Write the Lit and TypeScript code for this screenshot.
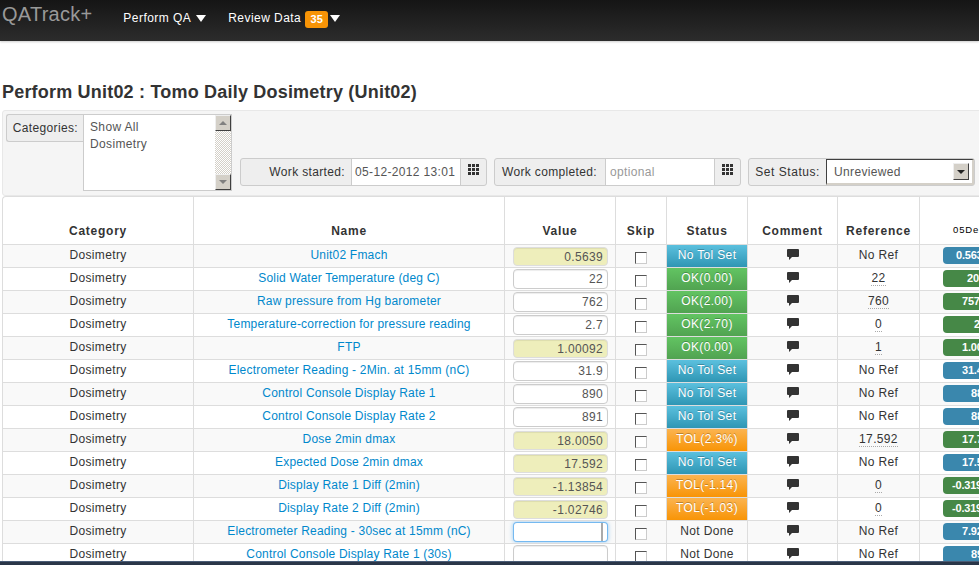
import { LitElement, css, html, svg } from 'lit';
import { customElement } from 'lit/decorators.js';

type Row = {
  name: string;
  value: string;
  calc?: boolean;
  status: string;
  kind: 'info' | 'ok' | 'tol' | 'none';
  ref: string;
  last: string;
  lastKind: 'info' | 'ok';
  lastPad: number;
  focus?: boolean;
};

const ROWS: Row[] = [
  { name: 'Unit02 Fmach', value: '0.5639', calc: true, status: 'No Tol Set', kind: 'info', ref: 'No Ref', last: '0.5639', lastKind: 'info', lastPad: 13 },
  { name: 'Solid Water Temperature (deg C)', value: '22', status: 'OK(0.00)', kind: 'ok', ref: '22', last: '20', lastKind: 'ok', lastPad: 24 },
  { name: 'Raw pressure from Hg barometer', value: '762', status: 'OK(2.00)', kind: 'ok', ref: '760', last: '757', lastKind: 'ok', lastPad: 19 },
  { name: 'Temperature-correction for pressure reading', value: '2.7', status: 'OK(2.70)', kind: 'ok', ref: '0', last: '2', lastKind: 'ok', lastPad: 31 },
  { name: 'FTP', value: '1.00092', calc: true, status: 'OK(0.00)', kind: 'ok', ref: '1', last: '1.00', lastKind: 'ok', lastPad: 19 },
  { name: 'Electrometer Reading - 2Min. at 15mm (nC)', value: '31.9', status: 'No Tol Set', kind: 'info', ref: 'No Ref', last: '31.4', lastKind: 'info', lastPad: 19 },
  { name: 'Control Console Display Rate 1', value: '890', status: 'No Tol Set', kind: 'info', ref: 'No Ref', last: '88', lastKind: 'info', lastPad: 28 },
  { name: 'Control Console Display Rate 2', value: '891', status: 'No Tol Set', kind: 'info', ref: 'No Ref', last: '88', lastKind: 'info', lastPad: 28 },
  { name: 'Dose 2min dmax', value: '18.0050', calc: true, status: 'TOL(2.3%)', kind: 'tol', ref: '17.592', last: '17.7', lastKind: 'ok', lastPad: 19 },
  { name: 'Expected Dose 2min dmax', value: '17.592', calc: true, status: 'No Tol Set', kind: 'info', ref: 'No Ref', last: '17.5', lastKind: 'info', lastPad: 19 },
  { name: 'Display Rate 1 Diff (2min)', value: '-1.13854', calc: true, status: 'TOL(-1.14)', kind: 'tol', ref: '0', last: '-0.319', lastKind: 'ok', lastPad: 9 },
  { name: 'Display Rate 2 Diff (2min)', value: '-1.02746', calc: true, status: 'TOL(-1.03)', kind: 'tol', ref: '0', last: '-0.319', lastKind: 'ok', lastPad: 9 },
  { name: 'Electrometer Reading - 30sec at 15mm (nC)', value: '', status: 'Not Done', kind: 'none', ref: 'No Ref', last: '7.92', lastKind: 'info', lastPad: 19, focus: true },
  { name: 'Control Console Display Rate 1 (30s)', value: '', status: 'Not Done', kind: 'none', ref: 'No Ref', last: '89', lastKind: 'info', lastPad: 28 },
];

const gridIcon = svg`<svg width="12" height="11" viewBox="0 0 12 11" fill="#333">
  <rect x="0" y="0" width="3" height="3"/><rect x="4" y="0" width="3" height="3"/><rect x="8" y="0" width="3" height="3"/>
  <rect x="0" y="4" width="3" height="3"/><rect x="4" y="4" width="3" height="3"/><rect x="8" y="4" width="3" height="3"/>
  <rect x="0" y="8" width="3" height="3"/><rect x="4" y="8" width="3" height="3"/><rect x="8" y="8" width="3" height="3"/>
</svg>`;

const commentIcon = svg`<svg width="12" height="11" viewBox="0 0 12 11" fill="#333">
  <path d="M1 0H11a1 1 0 0 1 1 1V7a1 1 0 0 1-1 1H5L2 11V8H1a1 1 0 0 1-1-1V1a1 1 0 0 1 1-1Z"/>
</svg>`;

@customElement('app-root')
export class AppRoot extends LitElement {
  static styles = css`
    :host {
      display: flex;
      flex-direction: column;
      height: 565px;
      overflow: hidden;
      background: #fff;
      font-family: 'Liberation Sans', Arial, sans-serif;
      font-size: 12px;
      letter-spacing: 0.35px;
      color: #333;
    }

    .navbar {
      flex: none;
      display: flex;
      align-items: center;
      height: 41px;
      padding-left: 2px;
      background: linear-gradient(#151515, #2c2c2c);
      box-shadow: 0 1px 2px rgba(0, 0, 0, 0.2);
    }
    .brand {
      font-size: 20px;
      color: #999;
      letter-spacing: 0.25px;
      margin-right: 31px;
      margin-top: -12px;
    }
    .nav-item {
      display: flex;
      align-items: center;
      color: #fff;
      letter-spacing: 0.45px;
      margin-right: 22px;
      margin-top: -5px;
    }
    .caret {
      width: 0;
      height: 0;
      margin-left: 5px;
      border-left: 5px solid transparent;
      border-right: 5px solid transparent;
      border-top: 7px solid #fff;
    }
    .count {
      margin: 2px 0 0 4px;
      width: 23px;
      text-align: center;
      background: #f89406;
      border-radius: 3px;
      font-size: 11px;
      font-weight: bold;
      line-height: 17px;
      letter-spacing: 0;
    }
    .count + .caret {
      margin-left: 2px;
    }

    main {
      flex: 1;
      min-height: 0;
      padding: 0 0 0 2px;
      overflow: hidden;
    }
    h1 {
      margin: 40px 0 7px;
      font-size: 18px;
      line-height: 22px;
      letter-spacing: 0.2px;
      color: #333;
    }

    .well {
      display: flex;
      gap: 7px;
      width: 990px;
      height: 86px;
      box-sizing: border-box;
      padding: 3px 4px 4px 3px;
      background: #f5f5f5;
      border: 1px solid #e8e8e8;
      border-radius: 3px;
    }
    .group {
      display: flex;
      align-items: stretch;
      height: 28px;
      box-sizing: border-box;
      border: 1px solid #ccc;
      border-radius: 3px;
      background: #eee;
    }
    .group.bottom {
      align-self: flex-end;
      margin-bottom: 5px;
    }
    .addon {
      display: flex;
      align-items: center;
      justify-content: flex-end;
      padding: 0 6px;
    }
    .addon.started {
      width: 98px;
    }
    .addon.completed {
      width: 96px;
      padding-right: 8px;
    }
    .addon.set-status {
      width: 65px;
      letter-spacing: 0.55px;
    }
    .field {
      display: flex;
      align-items: center;
      width: 102px;
      background: #fff;
      border-left: 1px solid #ccc;
      padding: 0 3px;
      color: #555;
    }
    .field.placeholder {
      width: 101px;
      padding-left: 4px;
      color: #999;
    }
    .icon-addon {
      display: flex;
      justify-content: center;
      padding-top: 5px;
      width: 26px;
      border-left: 1px solid #ccc;
      box-sizing: border-box;
    }

    .categories {
      display: flex;
      align-items: flex-start;
      margin-right: 1px;
    }
    .categories .addon {
      width: 66px;
      height: 26px;
      border: 1px solid #ccc;
      border-right: none;
      border-radius: 3px 0 0 3px;
      background: #eee;
      padding: 0 5px;
    }
    .listbox {
      display: flex;
      width: 149px;
      height: 77px;
      box-sizing: border-box;
      background: #fff;
      border: 1px solid #ccc;
      color: #555;
    }
    .options {
      flex: 1;
      padding: 4px 6px;
      line-height: 17px;
    }
    .scrollbar {
      width: 16px;
      display: flex;
      flex-direction: column;
      justify-content: space-between;
      background: repeating-conic-gradient(#d4d0c8 0 25%, #fff 0 50%) 0 0 / 2px 2px;
    }
    .sb-btn {
      height: 16px;
      box-sizing: border-box;
      display: flex;
      align-items: center;
      justify-content: center;
      background: #d4d0c8;
      border: 1px solid;
      border-color: #eee #404040 #404040 #eee;
    }
    .sb-btn i {
      width: 0;
      height: 0;
      border-left: 4px solid transparent;
      border-right: 4px solid transparent;
    }
    .sb-btn .up {
      border-bottom: 4px solid #808080;
    }
    .sb-btn .down {
      border-top: 4px solid #808080;
    }

    .status-select {
      width: 148px;
      box-sizing: border-box;
      display: flex;
      align-items: center;
      justify-content: space-between;
      padding: 0 3px 0 7px;
      background: #fff;
      color: #555;
      border: 2px solid;
      border-color: #404040 #d4d0c8 #d4d0c8 #404040;
      border-width: 1px 2px 2px 1px;
    }
    .status-select .sb-btn {
      width: 16px;
      height: 17px;
    }
    .status-select i {
      border-left: 4px solid transparent;
      border-right: 4px solid transparent;
      border-top: 4px solid #222;
    }

    table {
      border-collapse: separate;
      border-spacing: 0;
      table-layout: fixed;
      width: 1040px;
      background: #fff;
      border: 1px solid #ddd;
      border-right: none;
      border-radius: 4px 0 0 0;
    }
    col.c-cat {
      width: 190px;
    }
    col.c-name {
      width: 311px;
    }
    col.c-value {
      width: 111px;
    }
    col.c-skip {
      width: 51px;
    }
    col.c-status {
      width: 81px;
    }
    col.c-comment {
      width: 90px;
    }
    col.c-ref {
      width: 82px;
    }
    th,
    td {
      padding: 0;
      text-align: center;
      border-left: 1px solid #ddd;
      border-top: 1px solid #ddd;
      white-space: nowrap;
      overflow: hidden;
    }
    th:first-child,
    td:first-child {
      border-left: none;
    }
    th {
      border-top: none;
      height: 47px;
      vertical-align: bottom;
      padding-bottom: 6px;
      box-sizing: border-box;
      letter-spacing: 0.75px;
    }
    th.date {
      font-size: 9.5px;
      font-weight: normal;
      letter-spacing: 0.8px;
      color: #000;
      padding-bottom: 9px;
    }
    td {
      height: 22px;
      line-height: 20px;
      vertical-align: top;
    }
    tr:nth-child(odd) td {
      background: #f9f9f9;
    }
    a {
      color: #0088cc;
      text-decoration: none;
      letter-spacing: 0.2px;
    }

    input.value {
      display: block;
      width: 95px;
      height: 20px;
      margin: 1px auto 0 8px;
      padding: 0 4px 0 0;
      box-sizing: border-box;
      border: 1px solid #ccc;
      border-radius: 4px;
      background: #fff;
      text-align: right;
      font: inherit;
      letter-spacing: inherit;
      color: #555;
      outline: none;
      box-shadow: inset 0 1px 1px rgba(0, 0, 0, 0.075);
    }
    input.value.calc {
      height: 19px;
      margin-top: 2px;
      background: #eeeebb;
      border-color: #ddd;
    }
    input.value.focus {
      border-color: rgba(82, 168, 236, 0.8);
      box-shadow: 0 0 4px rgba(82, 168, 236, 0.6);
      background: linear-gradient(#aaa, #aaa) right 4px center / 2px 100% no-repeat #fff;
    }
    input.skip {
      appearance: none;
      display: block;
      width: 12px;
      height: 12px;
      margin: 7px auto 0 19px;
      background: #fff;
      border: 1px solid;
      border-color: #555 #ccc #ccc #555;
    }

    td.status {
      color: #fff;
      text-shadow: 0 -1px 0 rgba(0, 0, 0, 0.25);
    }
    td.status.info {
      background: linear-gradient(#5bc0de, #2f96b4) !important;
    }
    td.status.ok {
      background: linear-gradient(#62c462, #51a351) !important;
    }
    td.status.tol {
      background: linear-gradient(#fbb450, #f89406) !important;
    }
    td.status.none {
      color: #333;
      text-shadow: none;
    }
    .comment svg {
      display: block;
      margin: 4px 0 0 39px;
    }
    abbr {
      text-decoration: none;
      border-bottom: 1px dotted #aaa;
    }
    .badge {
      display: block;
      width: 70px;
      height: 17px;
      margin: 2px 0 0 23px;
      box-sizing: border-box;
      text-align: left;
      border-radius: 4px;
      color: #fff;
      font-size: 11px;
      font-weight: bold;
      letter-spacing: -0.2px;
      line-height: 17px;
    }
    .badge.info {
      background: #3a87ad;
    }
    .badge.ok {
      background: #468847;
    }

    .taskbar {
      flex: none;
      height: 4px;
      background: linear-gradient(#4a5c76 0 1px, #2a3648 1px);
    }
  `;

  private renderRow(r: Row) {
    const inputCls = `value${r.calc ? ' calc' : ''}${r.focus ? ' focus' : ''}`;
    return html`<tr>
      <td>Dosimetry</td>
      <td><a href="#">${r.name}</a></td>
      <td><input class=${inputCls} .value=${r.value} /></td>
      <td><input class="skip" type="checkbox" /></td>
      <td class="status ${r.kind}">${r.status}</td>
      <td class="comment">${commentIcon}</td>
      <td>${r.ref === 'No Ref' ? r.ref : html`<abbr>${r.ref}</abbr>`}</td>
      <td><span class="badge ${r.lastKind}" style="padding-left:${r.lastPad}px">${r.last}</span></td>
    </tr>`;
  }

  render() {
    return html`
      <header class="navbar">
        <span class="brand">QATrack+</span>
        <span class="nav-item">Perform QA<i class="caret"></i></span>
        <span class="nav-item">Review Data<span class="count">35</span><i class="caret"></i></span>
      </header>
      <main>
        <h1>Perform Unit02 : Tomo Daily Dosimetry (Unit02)</h1>
        <div class="well">
          <div class="categories">
            <span class="addon">Categories:</span>
            <div class="listbox">
              <div class="options">Show All<br />Dosimetry</div>
              <div class="scrollbar">
                <div class="sb-btn"><i class="up"></i></div>
                <div class="sb-btn"><i class="down"></i></div>
              </div>
            </div>
          </div>
          <div class="group bottom">
            <span class="addon started">Work started:</span>
            <span class="field">05-12-2012 13:01</span>
            <span class="icon-addon">${gridIcon}</span>
          </div>
          <div class="group bottom">
            <span class="addon completed">Work completed:</span>
            <span class="field placeholder">optional</span>
            <span class="icon-addon">${gridIcon}</span>
          </div>
          <div class="group bottom">
            <span class="addon set-status">Set Status:</span>
            <div class="status-select">
              Unreviewed
              <div class="sb-btn"><i></i></div>
            </div>
          </div>
        </div>
        <table>
          <colgroup>
            <col class="c-cat" />
            <col class="c-name" />
            <col class="c-value" />
            <col class="c-skip" />
            <col class="c-status" />
            <col class="c-comment" />
            <col class="c-ref" />
            <col />
          </colgroup>
          <thead>
            <tr>
              <th>Category</th>
              <th>Name</th>
              <th>Value</th>
              <th>Skip</th>
              <th>Status</th>
              <th>Comment</th>
              <th>Reference</th>
              <th class="date">05Dec2012</th>
            </tr>
          </thead>
          <tbody>
            ${ROWS.map((r) => this.renderRow(r))}
          </tbody>
        </table>
      </main>
      <div class="taskbar"></div>
    `;
  }
}
